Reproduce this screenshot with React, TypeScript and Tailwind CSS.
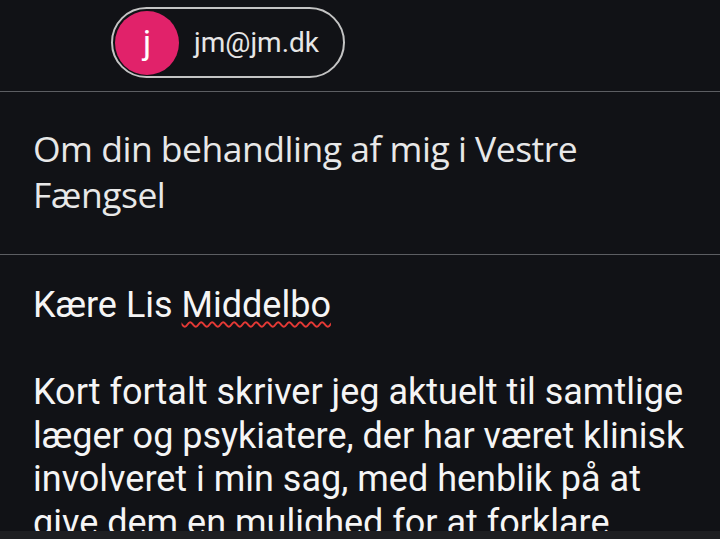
export default function App() {
  return (
    <div className="flex h-[539px] w-[720px] flex-col overflow-hidden bg-[#111216] font-['Roboto',sans-serif]">
      <div className="flex h-[92px] shrink-0 items-start border-b border-[#5c5e62] pl-[111px] pt-[7px]">
        <div className="flex h-[71px] w-[234px] items-center gap-[15px] rounded-full border-2 border-[#c4c4c4] pl-[2px]">
          <div className="grid h-[64px] w-[64px] place-items-center rounded-full bg-[#e1226a] text-[34px] text-white">j</div>
          <span className="text-[28px] text-[#e6e6e6]">jm@jm.dk</span>
        </div>
      </div>

      <div className="flex h-[163px] shrink-0 items-center border-b border-[#5c5e62] px-[33px] pb-[4px]">
        <h1 className="font-['Open_Sans',sans-serif] text-[35.5px] leading-[46px] tracking-[-0.5px] text-[#e8e8e8]">
          Om din behandling af mig i Vestre Fængsel
        </h1>
      </div>

      <div className="flex-1 overflow-hidden px-[33px] pt-[29px] text-[36px] leading-[43.5px] text-[#f5f5f5]">
        <p>
          Kære Lis{" "}
          <span className="underline decoration-[#e53935] decoration-wavy decoration-[1.5px] underline-offset-[4px]">Middelbo</span>
        </p>
        <p className="mt-[43.5px]">
          Kort fortalt skriver jeg aktuelt til samtlige læger og psykiatere, der har været klinisk involveret i min sag, med henblik på at give dem en mulighed for at forklare
        </p>
      </div>

      <div className="h-[8px] shrink-0 bg-[#1e1f22]" />
    </div>
  );
}
